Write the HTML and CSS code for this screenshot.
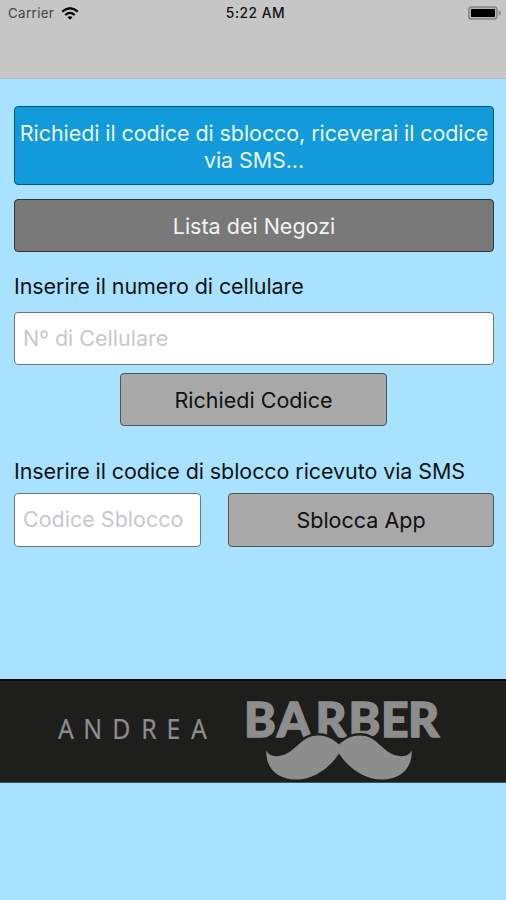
FILE: index.html
```html
<!DOCTYPE html>
<html lang="it">
<head>
<meta charset="utf-8">
<title>Andrea Barber</title>
<link rel="stylesheet" href="styles.css">
</head>
<body>
<header class="header">
  <div class="status">
    <div class="carrier"><span>Carrier</span>
      <svg class="wifi" viewBox="0 0 18 13" width="18" height="13"><g fill="none" stroke="#080808" stroke-width="2.3"><path d="M1.2 4.6Q9-2.2 16.8 4.6"/><path d="M4.3 8Q9 3.8 13.7 8"/></g><path d="M6.5 10.3Q9 8 11.5 10.3L9 12.8Z" fill="#080808"/></svg>
    </div>
    <div class="time">5:22 AM</div>
    <svg class="battery" viewBox="0 0 33 14" width="33" height="14"><rect x=".9" y=".9" width="28" height="12.2" rx="2.6" fill="#b5b5b5" stroke="#858585" stroke-width="1.5"/><rect x="3" y="3" width="24" height="8" rx=".7" fill="#000"/><path d="M30.5 4.5Q33 5 33 7T30.5 9.5Z" fill="#8b8b8b"/></svg>
  </div>
</header>
<main class="content">
  <div class="notice">Richiedi il codice di sblocco, riceverai il codice<br>via SMS...</div>
  <button class="btn shops">Lista dei Negozi</button>
  <label class="label phone-label" for="phone">Inserire il numero di cellulare</label>
  <input class="field phone" id="phone" placeholder="Nº di Cellulare">
  <button class="btn request">Richiedi Codice</button>
  <label class="label code-label" for="code">Inserire il codice di sblocco ricevuto via SMS</label>
  <div class="unlock-row">
    <input class="field code" id="code" placeholder="Codice Sblocco">
    <button class="btn unlock">Sblocca App</button>
  </div>
</main>
<div class="banner">
  <svg viewBox="0 679 506 104" width="506" height="104">
    <text class="andrea" transform="translate(58 739) scale(.92 1)" x="0 27.5 59 90.5 118 144.5">ANDREA</text>
    <text class="barber" y="737" x="244 277 315.5 348.5 381 408">BARBER</text>
    <path class="moustache" d="M266.5 750.5C269 757 278 757.5 286 754C298 748 303 735.5 318 735.5C328 735.5 334 740 339 744.5C344 740 350 735.5 360 735.5C375 735.5 380 748 392 754C400 757.5 409 757 411.5 750.5C413 767 401 779.5 382 779.5C363 779.5 348 767 339 753.5C330 767 315 779.5 296 779.5C277 779.5 265 767 266.5 750.5Z"/>
  </svg>
</div>
</body>
</html>
```

FILE: styles.css
```css
* { box-sizing: border-box; }
body {
  margin: 0;
  min-height: 900px;
  background: #a9e2ff;
  color: #101315;
  font-family: Inter, "Liberation Sans", sans-serif;
  font-size: 21.5px;
  letter-spacing: -.08px;
}
.header {
  height: 79px;
  background: #c6c6c6;
  border-bottom: 1px solid #b4b8ba;
}
.status {
  display: grid;
  grid-template-columns: 1fr auto 1fr;
  align-items: center;
  height: 26px;
  padding: 0 5px 0 8px;
  font-size: 13.3px;
}
.carrier { display: flex; align-items: center; gap: 7px; color: #444; letter-spacing: .38px; }
.time { font-weight: 500; font-size: 13.8px; letter-spacing: .5px; margin-left: 2px; }
.battery { justify-self: end; }
.content {
  display: flex;
  flex-direction: column;
  height: 600px;
  padding: 27px 12px 0 14px;
}
.notice {
  height: 79px;
  padding-top: 13px;
  border: 1px solid #07557c;
  border-radius: 4px;
  background: #129adb;
  color: #e9f7ff;
  line-height: 27px;
  text-align: center;
  white-space: nowrap;
}
.btn {
  height: 53px;
  padding: 0;
  border: 1px solid #505452;
  border-radius: 4px;
  background: #a9a9a9;
  color: #101010;
  font: inherit;
}
.btn.shops {
  margin-top: 14px;
  background: #797979;
  border-color: #333631;
  color: #f3f3f3;
}
.label { line-height: 28px; white-space: nowrap; }
.phone-label { margin-top: 20px; }
.field {
  min-width: 0;
  height: 53px;
  padding: 0 8px 2px;
  border: 1px solid #707678;
  border-radius: 4px;
  background: #fff;
  font: inherit;
}
.field::placeholder { color: #c7c7cb; opacity: 1; }
.phone { margin-top: 12px; }
.request { width: 267px; margin: 8px 0 0 106px; }
.code-label { margin-top: 31px; }
.unlock-row {
  display: grid;
  grid-template-columns: 187px 266px;
  justify-content: space-between;
  margin-top: 8px;
}
.unlock-row > * { height: 54px; }
.banner {
  height: 104px;
  background: #1e1e1c;
  border-top: 2px solid #050809;
  border-bottom: 1px solid #40545d;
}
.banner svg { display: block; margin-top: -2px; }
.andrea { font: 27px "Noto Sans", sans-serif; letter-spacing: 0; fill: #8d8d8d; stroke: #8d8d8d; stroke-width: .2px; }
.barber { font: 900 48px Lato, sans-serif; letter-spacing: 0; fill: #8d8d8d; stroke: #8d8d8d; stroke-width: 1.4px; }
.moustache { fill: #8d8d8d; stroke: #1e1e1c; stroke-width: 5px; paint-order: stroke; }
```
